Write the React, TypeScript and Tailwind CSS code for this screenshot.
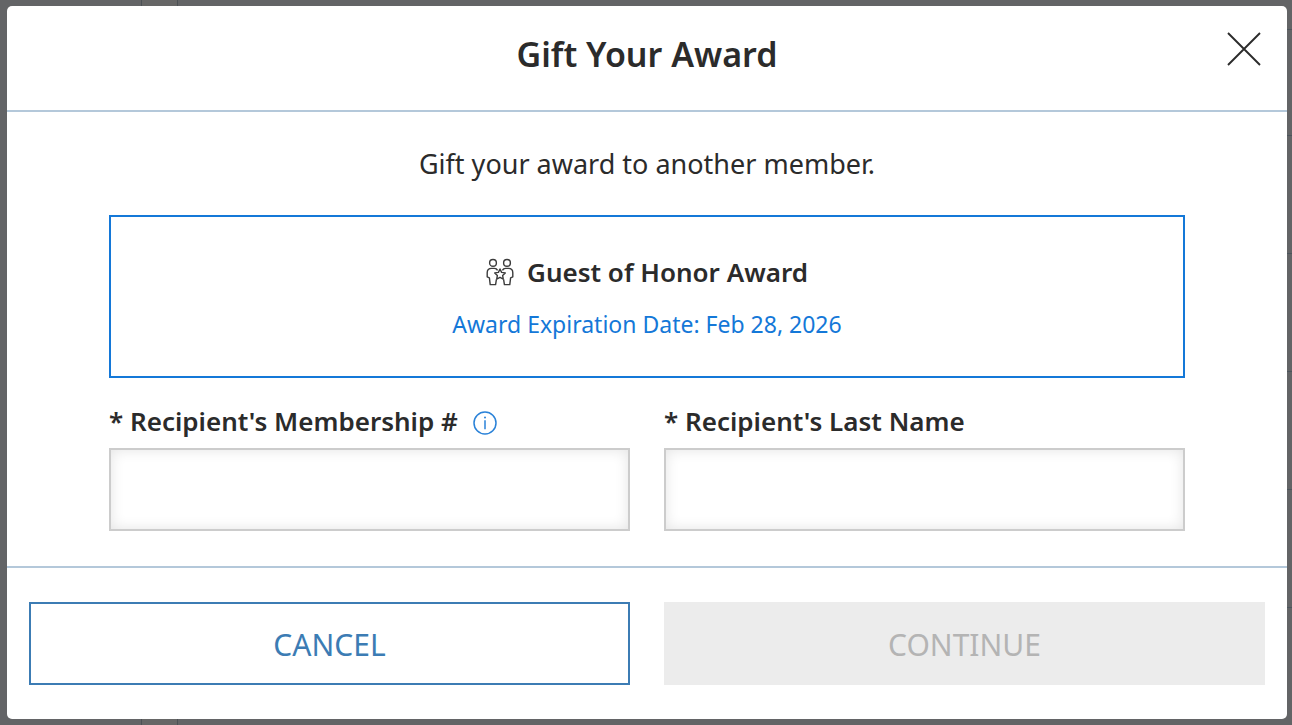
import React from "react";

const rowHeights = [30, 106, 118, 118, 118, 118];

function PageBehind() {
  return (
    <div aria-hidden="true" className="absolute inset-0 flex overflow-hidden bg-[#636466]">
      <div className="w-[142px] shrink-0 border-r border-[#4c5155]" />
      <div className="w-9 shrink-0 border-r border-[#4c5155] bg-[#666666]" />
      <div className="grow">
        {rowHeights.map((height, i) => (
          <div key={i} className="border-b border-[#4c555c]" style={{ height }} />
        ))}
      </div>
    </div>
  );
}

function CloseIcon() {
  return (
    <svg viewBox="0 0 34 34" className="size-[34px]" fill="none" stroke="currentColor" strokeWidth="1.9" aria-hidden="true">
      <path d="M1 1 33 33M33 1 1 33" />
    </svg>
  );
}

function GuestsIcon() {
  return (
    <svg viewBox="0 0 28 28" className="size-7 text-[#3c3c3c]" fill="none" stroke="currentColor" strokeWidth="1.4" strokeLinejoin="round" aria-hidden="true">
      <circle cx="7" cy="4.9" r="3.4" />
      <circle cx="21" cy="4.9" r="3.4" />
      <path d="M11.6 12.4C10.900 11 9.800 10.400 8.400 10.400H5.600C3 10.400 1.200 12.200 1.200 14.800V18.800L3.400 19.800L4.200 26.600H9.600L10.400 21.400" />
      <path d="M16.400 12.400C17.100 11 18.200 10.400 19.600 10.400H22.400C25 10.400 26.800 12.200 26.800 14.800V18.800L24.600 19.800L23.800 26.600H18.400L17.600 21.400" />
      <path d="M14 11 15.600 14.400 19.300 14.900 16.600 17.400 17.300 21.100 14 19.300 10.700 21.100 11.400 17.400 8.700 14.900 12.400 14.400Z" />
    </svg>
  );
}

function InfoIcon() {
  return (
    <svg viewBox="0 0 24 24" className="size-6" fill="none" stroke="currentColor" strokeWidth="1.5" aria-hidden="true">
      <circle cx="12" cy="12" r="11" />
      <path d="M12 9.300V18.300" />
      <circle cx="12" cy="6.500" r="1" fill="currentColor" stroke="none" />
    </svg>
  );
}

const inputClass =
  "mt-[7px] block h-[83px] w-full border-2 border-[#cccccc] bg-white px-5 text-[26px] text-[#2b2b2b] shadow-[inset_0_0_14px_rgba(0,0,0,0.11)] outline-none focus:border-[#1478d8]";

export default function App() {
  return (
    <div className="relative min-h-screen bg-[#636466] pt-[6px] pr-[5px] pb-[6px] pl-[7px] font-['Noto_Sans',sans-serif] text-[#2b2b2b]">
      <PageBehind />
      <form
        role="dialog"
        aria-modal="true"
        aria-labelledby="gift-title"
        className="relative overflow-hidden rounded-[5px] bg-white"
        onSubmit={(e: React.FormEvent) => e.preventDefault()}
      >
        <header className="relative border-b-2 border-[#b4c8da] px-20 pt-6 pb-8">
          <h1 id="gift-title" className="text-center text-[34px] leading-[48px] font-semibold">
            Gift Your Award
          </h1>
          <button type="button" aria-label="Close" className="absolute top-[26px] right-[26px]">
            <CloseIcon />
          </button>
        </header>

        <div className="px-[102px] pt-8 pb-[35px]">
          <p className="text-center text-[27px] leading-10">Gift your award to another member.</p>
          <section className="mt-[31px] border-2 border-[#1478d8] pt-[35px] pb-8 text-center">
            <h2 className="flex items-center justify-center gap-[13px] text-[26px] leading-10 font-semibold">
              <GuestsIcon />
              Guest of Honor Award
            </h2>
            <p className="mt-3 text-[23px] leading-10 text-[#1478d8]">Award Expiration Date: Feb 28, 2026</p>
          </section>

          <div className="mt-[23px] grid grid-cols-2 gap-[34px]">
            <div>
              <div className="flex items-center gap-[15px]">
                <label htmlFor="membership" className="text-[26px] leading-10 font-semibold">
                  * Recipient's Membership #
                </label>
                <button type="button" aria-label="About membership numbers" className="mt-1 text-[#2a82d8]">
                  <InfoIcon />
                </button>
              </div>
              <input id="membership" type="text" required className={inputClass} />
            </div>
            <div>
              <label htmlFor="last-name" className="block text-[26px] leading-10 font-semibold">
                * Recipient's Last Name
              </label>
              <input id="last-name" type="text" required className={inputClass} />
            </div>
          </div>
        </div>

        <footer className="grid grid-cols-2 gap-[34px] border-t-2 border-[#b4c8da] px-[22px] py-[34px]">
          <button type="button" className="h-[83px] border-2 border-[#3c7cb4] pt-px text-[30px] text-[#3c7cb4]">
            CANCEL
          </button>
          <button type="submit" disabled className="h-[83px] bg-[#ececec] pt-px text-[30px] text-[#b4b4b4]">
            CONTINUE
          </button>
        </footer>
      </form>
    </div>
  );
}
